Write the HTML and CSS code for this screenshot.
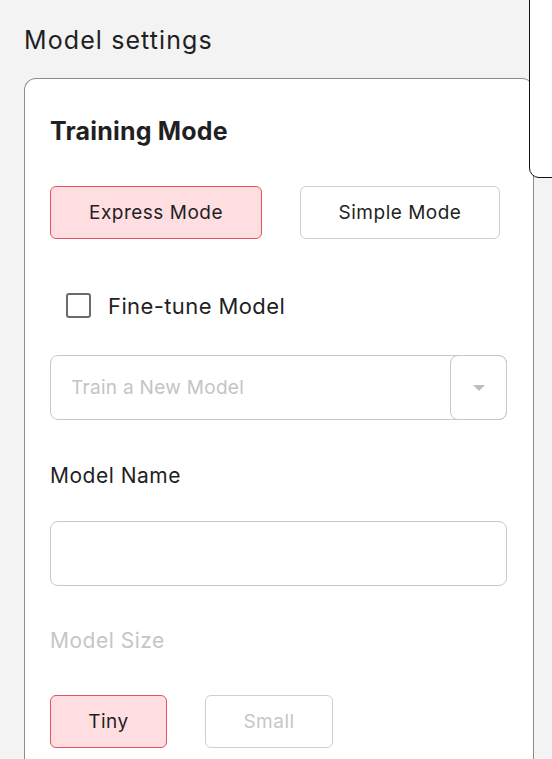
FILE: index.html
```html
<!DOCTYPE html>
<html>
<head>
<meta charset="utf-8">
<link rel="stylesheet" href="styles.css">
</head>
<body>
<div class="page">
  <h2 class="page-title">Model settings</h2>
  <div class="card">
    <h3 class="card-title">Training Mode</h3>
    <div class="btn-row">
      <button class="opt opt-active opt-express">Express Mode</button>
      <button class="opt opt-simple">Simple Mode</button>
    </div>
    <label class="check-row">
      <span class="checkbox"></span>
      <span class="check-label">Fine-tune Model</span>
    </label>
    <div class="select">
      <div class="select-value">Train a New Model</div>
      <div class="select-toggle"><span class="caret"></span></div>
    </div>
    <div class="field-label label-name">Model Name</div>
    <div class="text-input"></div>
    <div class="field-label label-size">Model Size</div>
    <div class="btn-row size-row">
      <button class="opt opt-active opt-tiny">Tiny</button>
      <button class="opt opt-disabled opt-small">Small</button>
    </div>
  </div>
</div>
<div class="overlay-panel"></div>
</body>
</html>
```
FILE: styles.css
```css
* { box-sizing: border-box; }
html, body { margin: 0; padding: 0; }
body {
  background: #f3f3f3;
  font-family: "Inter", "Liberation Sans", sans-serif;
  color: #1f1f24;
  width: 552px;
  height: 759px;
  overflow: hidden;
  position: relative;
}
.page { padding: 26px 0 0 24px; }
.page-title {
  margin: 0;
  font-size: 25px;
  line-height: 28px;
  font-weight: 400;
  letter-spacing: 1.1px;
}
.card {
  margin-top: 24px;
  width: 510px;
  height: 681px;
  background: #fff;
  border: 1px solid #8c8c8c;
  border-bottom: 0;
  border-radius: 12px 12px 0 0;
  padding: 37px 26px 0 25px;
}
.card-title {
  margin: 0;
  font-size: 25px;
  line-height: 30px;
  font-weight: 700;
  letter-spacing: 0.2px;
}
.btn-row {
  display: flex;
  gap: 38px;
  margin-top: 40px;
}
.opt {
  font-family: inherit;
  height: 53px;
  border-radius: 6px;
  border: 1px solid #cfcfcf;
  background: #fff;
  color: #1f1f24;
  font-size: 19px;
  letter-spacing: 0.5px;
  padding: 0;
}
.opt-active { background: #ffdee2; border-color: #e6525d; }
.opt-disabled { color: #c6c6c6; }
.opt-express { width: 212px; }
.opt-simple { width: 200px; }
.opt-tiny { width: 117px; }
.opt-small { width: 128px; }
.check-row {
  display: flex;
  align-items: center;
  gap: 17px;
  margin: 54px 0 0 16px;
  height: 25px;
}
.checkbox {
  width: 25px;
  height: 25px;
  border: 2.5px solid #6b6b6b;
  border-radius: 3px;
}
.check-label { font-size: 22px; letter-spacing: 0.4px; }
.select {
  margin-top: 37px;
  height: 65px;
  border: 1px solid #c9c9c9;
  border-radius: 8px;
  display: flex;
}
.select-value {
  flex: 1;
  padding-left: 20px;
  display: flex;
  align-items: center;
  font-size: 19px;
  letter-spacing: 0.3px;
  color: #c4c4c4;
}
.select-toggle {
  width: 57px;
  margin: -1px -1px -1px 0;
  border: 1px solid #c9c9c9;
  border-radius: 8px;
  display: flex;
  align-items: center;
  justify-content: center;
}
.caret {
  width: 0; height: 0;
  border-left: 6px solid transparent;
  border-right: 6px solid transparent;
  border-top: 6px solid #bdbdbd;
}
.field-label {
  font-size: 21px;
  line-height: 26px;
  letter-spacing: 0.5px;
}
.label-name { margin-top: 43px; }
.text-input {
  margin-top: 32px;
  height: 65px;
  border: 1px solid #c9c9c9;
  border-radius: 8px;
}
.label-size { margin-top: 42px; color: #c6c6c6; }
.size-row { margin-top: 41px; }
.overlay-panel {
  position: absolute;
  left: 529px;
  top: -10px;
  width: 40px;
  height: 188px;
  background: #fff;
  border: 1.5px solid #111;
  border-bottom-left-radius: 10px;
}
```
